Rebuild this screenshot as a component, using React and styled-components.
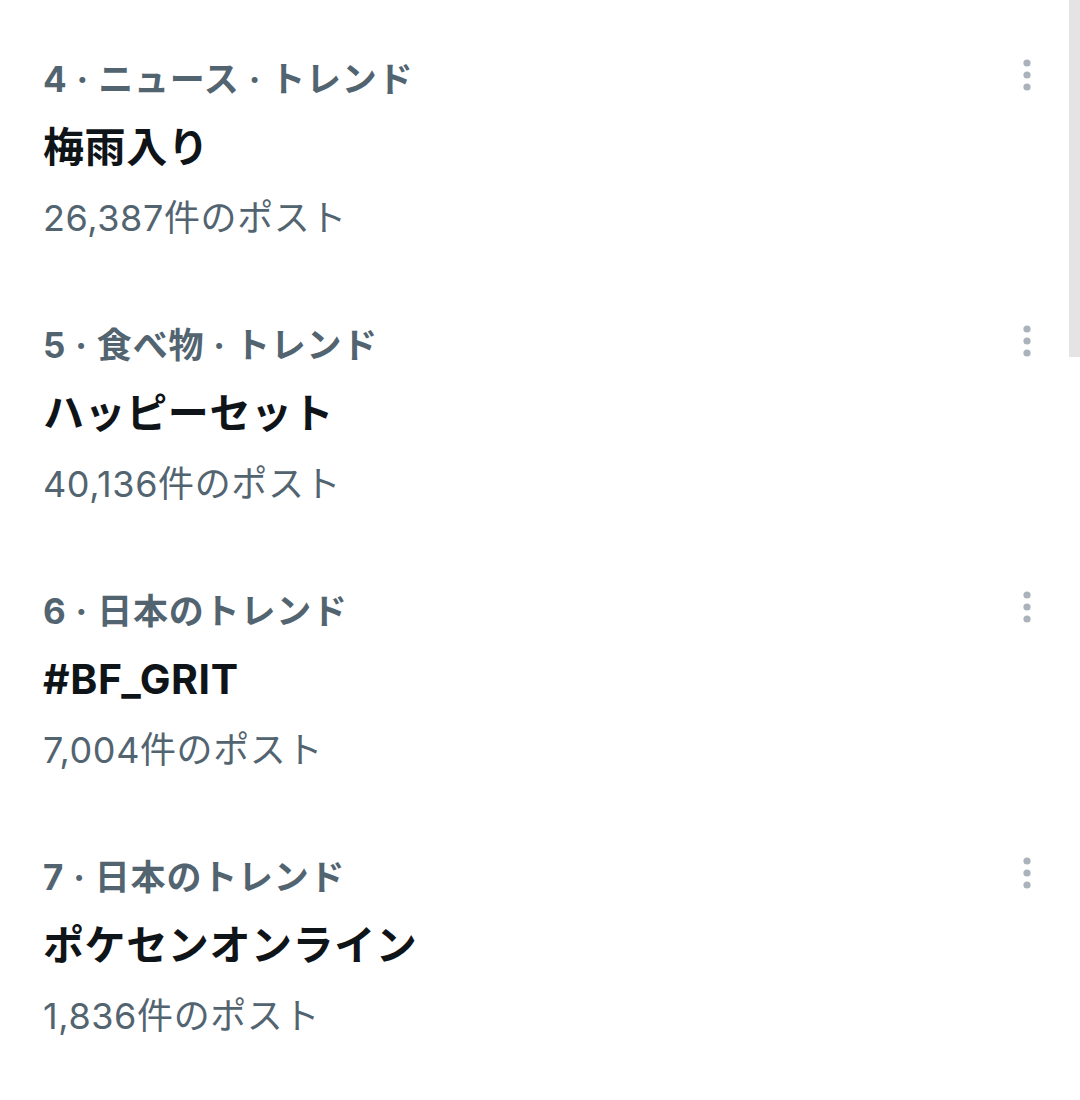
import styled, { createGlobalStyle } from "styled-components";

const Global = createGlobalStyle`
  html, body {
    margin: 0;
    padding: 0;
    background: #fff;
  }
  body {
    font-family: Inter, "Noto Sans CJK JP", sans-serif;
  }
`;

const Page = styled.div`
  position: relative;
  width: 1080px;
  height: 1100px;
  overflow: hidden;
  background: #fff;
  padding-top: 54px;
  box-sizing: border-box;
`;

const ScrollThumb = styled.div`
  position: absolute;
  top: 0;
  right: 0;
  width: 11px;
  height: 357px;
  background: #e4e4e4;
`;

const Trend = styled.div`
  display: flex;
  align-items: flex-start;
  justify-content: space-between;
  padding: 0 43px 74px 43px;
`;

const Body = styled.div`
  display: flex;
  flex-direction: column;
`;

const Category = styled.div`
  font-size: 35px;
  line-height: 50px;
  font-weight: 700;
  letter-spacing: 0.8px;
  color: #536471;
  white-space: nowrap;
`;

const Title = styled.div`
  font-size: 41px;
  line-height: 86px;
  font-weight: 700;
  letter-spacing: 0.6px;
  color: #0f1419;
  white-space: nowrap;
`;

const Count = styled.div`
  font-size: 36px;
  line-height: 56px;
  font-weight: 400;
  letter-spacing: 0.6px;
  color: #536471;
  white-space: nowrap;
`;

const More = styled.button`
  border: 0;
  padding: 0;
  margin-top: 5px;
  background: none;
  width: 20px;
  height: 32px;
  display: flex;
  svg {
    display: block;
  }
`;

const trends = [
  { category: "4 · ニュース · トレンド", title: "梅雨入り", count: "26,387件のポスト" },
  { category: "5 · 食べ物 · トレンド", title: "ハッピーセット", count: "40,136件のポスト" },
  { category: "6 · 日本のトレンド", title: "#BF_GRIT", count: "7,004件のポスト" },
  { category: "7 · 日本のトレンド", title: "ポケセンオンライン", count: "1,836件のポスト" },
];

const MoreIcon = () => (
  <svg width="20" height="32" viewBox="0 0 20 32">
    <circle cx="10" cy="4" r="3.6" fill="#aab3bb" />
    <circle cx="10" cy="16" r="3.6" fill="#aab3bb" />
    <circle cx="10" cy="28" r="3.6" fill="#aab3bb" />
  </svg>
);

export default function App() {
  return (
    <Page>
      <Global />
      {trends.map((t) => (
        <Trend key={t.title}>
          <Body>
            <Category>{t.category}</Category>
            <Title>{t.title}</Title>
            <Count>{t.count}</Count>
          </Body>
          <More aria-label="more">
            <MoreIcon />
          </More>
        </Trend>
      ))}
      <ScrollThumb />
    </Page>
  );
}
